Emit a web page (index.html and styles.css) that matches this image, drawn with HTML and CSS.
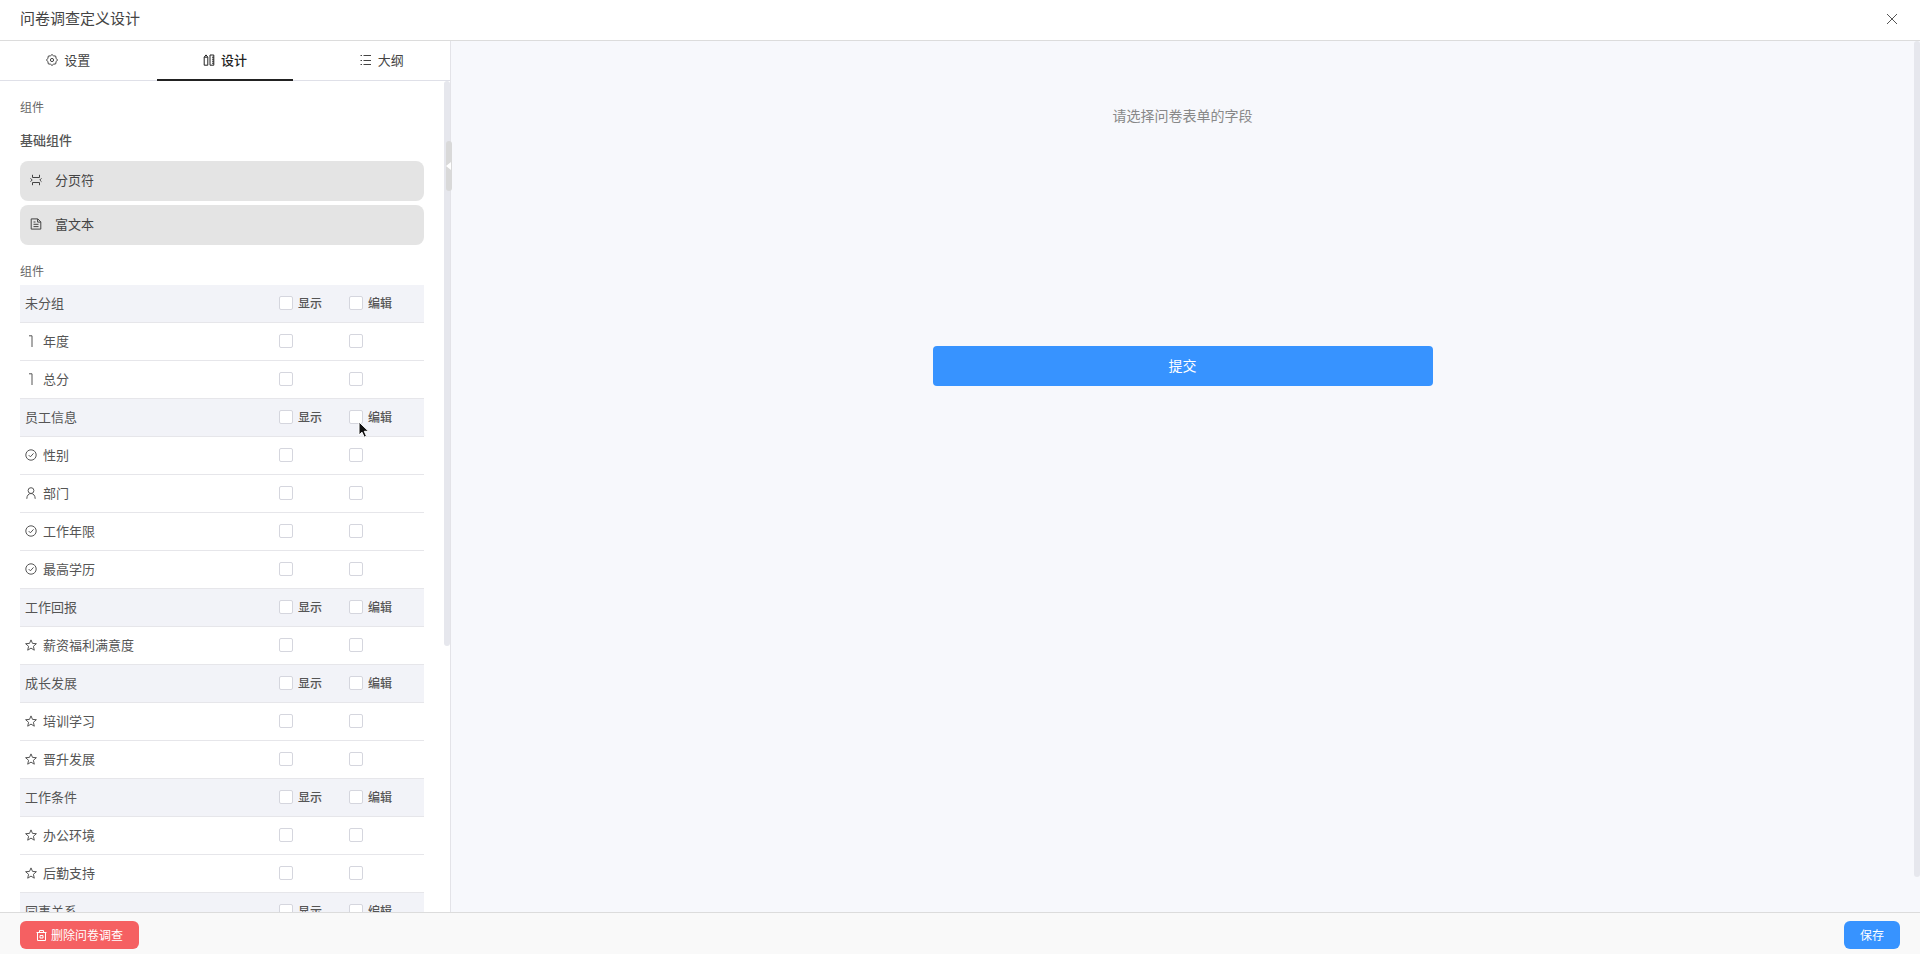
FILE: index.html
```html
<!DOCTYPE html>
<html lang="zh-CN">
<head>
    <meta charset="UTF-8">
    <meta name="viewport" content="width=device-width, initial-scale=1.0">
    <title>问卷调查定义设计</title>
    <link rel="stylesheet" href="styles.css">
</head>
<body>
    <!-- shared icons -->
    <svg class="sprite" aria-hidden="true">
        <symbol id="i-check" viewBox="0 0 12 12"><circle cx="6" cy="6" r="5.2"/><path d="M3.7 6.1l1.7 1.7 3.1-3.4"/></symbol>
        <symbol id="i-star" viewBox="0 0 12 12"><path d="M6 .9l1.5 3.5 3.9.3-3 2.6.9 3.9L6 9.1l-3.3 2.1.9-3.9-3-2.6 3.9-.3z"/></symbol>
        <symbol id="i-user" viewBox="0 0 12 12"><circle cx="6" cy="3.6" r="2.9"/><path d="M1.8 11.8C1.8 8.6 3.6 6.5 6 6.5s4.2 2.1 4.2 5.3"/></symbol>
        <symbol id="i-number" viewBox="0 0 12 12"><path d="M4 .8h3V12"/></symbol>
    </svg>

    <div class="page">
        <header class="header">
            <h1>问卷调查定义设计</h1>
            <button class="close-btn" aria-label="关闭">
                <svg viewBox="0 0 12 12"><path d="M1 1l10 10M11 1L1 11"/></svg>
            </button>
        </header>

        <div class="body">
            <aside class="sidebar">
                <nav class="tabs">
                    <button class="tab">
                        <svg class="icon" viewBox="0 0 12 12"><path d="M6 .5l1.5 1.3 2.2.3.4 2.2L11.5 6l-1.4 1.7-.4 2.2-2.2.3L6 11.5l-1.5-1.3-2.2-.3-.4-2.2L.5 6l1.4-1.7.4-2.2 2.2-.3z"/><circle cx="6" cy="6" r="1.6"/></svg>
                        设置
                    </button>
                    <button class="tab active">
                        <svg class="icon" viewBox="0 0 12 12"><path d="M1.2 11.2V3.2L3 .9l1.8 2.3v8zM1.2 3.2h3.6M7 1h3.8v10.2H7zM9 3.2h1.8M9 5.2h1.8M9 7.2h1.8M9 9.2h1.8"/></svg>
                        设计
                    </button>
                    <button class="tab">
                        <svg class="icon" viewBox="0 0 12 12"><path d="M3.5 1.5H11M3.5 6.5H11M3.5 10.5H11M.5 1.5h1.5M.5 6.5h1.5M.5 10.5h1.5"/></svg>
                        大纲
                    </button>
                </nav>

                <div class="scroll-area">
                    <div class="panel">
                        <p class="caption">组件</p>
                        <h2>基础组件</h2>
                        <div class="widgets">
                            <button class="widget">
                                <svg class="icon" viewBox="0 0 12 12"><path d="M2.5.8v2.7h7V.8M2.5 11.2V8.5h7v2.7M.5 4.3L2.2 6 .5 7.7M11.5 4.3L9.8 6l1.7 1.7"/></svg>
                                分页符
                            </button>
                            <button class="widget">
                                <svg class="icon" viewBox="0 0 12 12"><path d="M1.2.9h6.6l3 3v7.2H1.2zM7.6 1v3.1h3.1M3.5 4h2M3.5 6.3h5M3.5 8.6h5"/></svg>
                                富文本
                            </button>
                        </div>

                        <p class="caption">组件</p>
                        <table class="fields">
                            <colgroup><col><col class="col-show"><col class="col-edit"></colgroup>
                            <tbody>
                                <tr class="group">
                                    <th>未分组</th>
                                    <td><label><input type="checkbox">显示</label></td>
                                    <td><label><input type="checkbox">编辑</label></td>
                                </tr>
                                <tr>
                                    <td><span class="field"><svg class="icon"><use href="#i-number"/></svg>年度</span></td>
                                    <td><input type="checkbox" aria-label="年度 显示"></td>
                                    <td><input type="checkbox" aria-label="年度 编辑"></td>
                                </tr>
                                <tr>
                                    <td><span class="field"><svg class="icon"><use href="#i-number"/></svg>总分</span></td>
                                    <td><input type="checkbox" aria-label="总分 显示"></td>
                                    <td><input type="checkbox" aria-label="总分 编辑"></td>
                                </tr>
                                <tr class="group">
                                    <th>员工信息</th>
                                    <td><label><input type="checkbox">显示</label></td>
                                    <td class="hovered">
                                        <label><input type="checkbox">编辑</label>
                                        <svg class="pointer" viewBox="0 0 12 18"><path d="M1 1v13l3-2.8 2.2 5 2.3-1-2.2-4.9h4.3z"/></svg>
                                    </td>
                                </tr>
                                <tr>
                                    <td><span class="field"><svg class="icon"><use href="#i-check"/></svg>性别</span></td>
                                    <td><input type="checkbox" aria-label="性别 显示"></td>
                                    <td><input type="checkbox" aria-label="性别 编辑"></td>
                                </tr>
                                <tr>
                                    <td><span class="field"><svg class="icon"><use href="#i-user"/></svg>部门</span></td>
                                    <td><input type="checkbox" aria-label="部门 显示"></td>
                                    <td><input type="checkbox" aria-label="部门 编辑"></td>
                                </tr>
                                <tr>
                                    <td><span class="field"><svg class="icon"><use href="#i-check"/></svg>工作年限</span></td>
                                    <td><input type="checkbox" aria-label="工作年限 显示"></td>
                                    <td><input type="checkbox" aria-label="工作年限 编辑"></td>
                                </tr>
                                <tr>
                                    <td><span class="field"><svg class="icon"><use href="#i-check"/></svg>最高学历</span></td>
                                    <td><input type="checkbox" aria-label="最高学历 显示"></td>
                                    <td><input type="checkbox" aria-label="最高学历 编辑"></td>
                                </tr>
                                <tr class="group">
                                    <th>工作回报</th>
                                    <td><label><input type="checkbox">显示</label></td>
                                    <td><label><input type="checkbox">编辑</label></td>
                                </tr>
                                <tr>
                                    <td><span class="field"><svg class="icon"><use href="#i-star"/></svg>薪资福利满意度</span></td>
                                    <td><input type="checkbox" aria-label="薪资福利满意度 显示"></td>
                                    <td><input type="checkbox" aria-label="薪资福利满意度 编辑"></td>
                                </tr>
                                <tr class="group">
                                    <th>成长发展</th>
                                    <td><label><input type="checkbox">显示</label></td>
                                    <td><label><input type="checkbox">编辑</label></td>
                                </tr>
                                <tr>
                                    <td><span class="field"><svg class="icon"><use href="#i-star"/></svg>培训学习</span></td>
                                    <td><input type="checkbox" aria-label="培训学习 显示"></td>
                                    <td><input type="checkbox" aria-label="培训学习 编辑"></td>
                                </tr>
                                <tr>
                                    <td><span class="field"><svg class="icon"><use href="#i-star"/></svg>晋升发展</span></td>
                                    <td><input type="checkbox" aria-label="晋升发展 显示"></td>
                                    <td><input type="checkbox" aria-label="晋升发展 编辑"></td>
                                </tr>
                                <tr class="group">
                                    <th>工作条件</th>
                                    <td><label><input type="checkbox">显示</label></td>
                                    <td><label><input type="checkbox">编辑</label></td>
                                </tr>
                                <tr>
                                    <td><span class="field"><svg class="icon"><use href="#i-star"/></svg>办公环境</span></td>
                                    <td><input type="checkbox" aria-label="办公环境 显示"></td>
                                    <td><input type="checkbox" aria-label="办公环境 编辑"></td>
                                </tr>
                                <tr>
                                    <td><span class="field"><svg class="icon"><use href="#i-star"/></svg>后勤支持</span></td>
                                    <td><input type="checkbox" aria-label="后勤支持 显示"></td>
                                    <td><input type="checkbox" aria-label="后勤支持 编辑"></td>
                                </tr>
                                <tr class="group">
                                    <th>同事关系</th>
                                    <td><label><input type="checkbox">显示</label></td>
                                    <td><label><input type="checkbox">编辑</label></td>
                                </tr>
                            </tbody>
                        </table>
                    </div>
                    <div class="thumb thumb-side"></div>
                </div>
                <button class="collapse-btn" aria-label="收起">
                    <svg viewBox="0 0 6 8"><path d="M5 0v8L0 4z"/></svg>
                </button>
            </aside>

            <main class="preview">
                <p class="hint">请选择问卷表单的字段</p>
                <button class="submit-btn">提交</button>
                <div class="thumb thumb-main"></div>
            </main>
        </div>

        <footer class="footer">
            <button class="btn btn-danger">
                <svg class="icon-sm" viewBox="0 0 11 11"><path d="M.5 2.5h10M3.5 2.5v-2h4v2M1.5 2.5v8h8v-8M4 5.5h3v2.5H4z"/></svg>
                删除问卷调查
            </button>
            <button class="btn btn-primary">保存</button>
        </footer>
    </div>
</body>
</html>
```
FILE: styles.css
```css
* {
    box-sizing: border-box;
}
body {
    margin: 0;
    font-family: "Noto Sans CJK SC", sans-serif;
    font-size: 13px;
    line-height: 20px;
    color: #555;
    background: #fff;
}
button {
    font: inherit;
    color: inherit;
    border: none;
    background: none;
    padding: 0;
    cursor: pointer;
}
h1, h2, p {
    margin: 0;
}
svg {
    display: block;
    fill: none;
    stroke: currentColor;
}
.sprite {
    position: absolute;
    width: 0;
    height: 0;
}
.icon {
    width: 12px;
    height: 12px;
    flex: none;
}
.icon-sm {
    width: 11px;
    height: 11px;
}
.page {
    display: flex;
    flex-direction: column;
    height: 100vh;
}

/* header */
.header {
    display: flex;
    align-items: center;
    justify-content: space-between;
    padding: 8px 22px 12px 20px;
    border-bottom: 1px solid #dcdcdc;
}
.header h1 {
    font-size: 15px;
    font-weight: 400;
    line-height: 20px;
    color: #444;
}
.close-btn {
    padding-top: 2px;
}
.close-btn svg {
    width: 12px;
    height: 12px;
}

.body {
    display: flex;
    flex: 1;
    min-height: 0;
}

/* left panel */
.sidebar {
    position: relative;
    display: flex;
    flex-direction: column;
    width: 451px;
    flex: none;
    border-right: 1px solid #e3e3e8;
}
.tabs {
    display: grid;
    grid-template-columns: repeat(3, 1fr);
    gap: 20px;
    border-bottom: 1px solid #dfe0e8;
}
.tab {
    display: flex;
    align-items: center;
    justify-content: center;
    gap: 6px;
    height: 40px;
    margin-bottom: -1px;
    border-bottom: 2px solid transparent;
    color: #444;
}
.tab.active {
    color: #222;
    font-weight: 500;
    border-bottom-color: #222;
}
.scroll-area {
    position: relative;
    flex: 1;
    min-height: 0;
}
.panel {
    height: 100%;
    overflow-y: auto;
    scrollbar-width: none;
    padding: 16px 26px 0 20px;
}
.caption {
    font-size: 12px;
    color: #666;
}
.panel h2 {
    margin: 13px 0 11px;
    font-size: 13px;
    font-weight: 500;
    color: #555;
}
.widgets {
    display: flex;
    flex-direction: column;
    gap: 4px;
    margin-bottom: 16px;
}
.widget {
    display: flex;
    align-items: center;
    gap: 13px;
    height: 40px;
    padding: 0 10px 2px;
    border-radius: 8px;
    background: #e4e4e4;
    color: #444;
}
.fields {
    width: 100%;
    margin-top: 4px;
    table-layout: fixed;
    border-collapse: separate;
    border-spacing: 0;
}
.col-show {
    width: 70px;
}
.col-edit {
    width: 75px;
}
.fields th,
.fields td {
    height: 38px;
    padding: 0 0 2px 5px;
    border-bottom: 1px solid #e6e6ea;
    font-weight: 400;
    text-align: left;
}
.group {
    background: #f2f3f8;
}
.field {
    display: flex;
    align-items: center;
    gap: 6px;
}
.fields th + td,
.fields td + td {
    padding-left: 0;
}
.fields label {
    display: flex;
    align-items: center;
    gap: 5px;
    font-size: 12px;
    font-weight: 500;
    color: #555;
}
.fields input {
    display: block;
    appearance: none;
    width: 14px;
    height: 14px;
    margin: 0;
    border: 1px solid #d5d6de;
    border-radius: 2px;
    background: #fff;
}
.hovered {
    position: relative;
}
.pointer {
    position: absolute;
    left: 9px;
    top: 22px;
    width: 12px;
    height: 18px;
    fill: #111;
    stroke: #fff;
}

/* scroll thumbs lie over the scrolled content */
.thumb {
    position: absolute;
    top: 0;
    right: 0;
    width: 6px;
    border-radius: 3px;
    background: #e6e7ed;
}
.thumb-side {
    height: 68%;
}
.thumb-main {
    height: 96%;
}
.collapse-btn {
    position: absolute;
    top: 100px;
    right: -2px;
    z-index: 1;
    display: flex;
    align-items: center;
    width: 6px;
    height: 50px;
    border-radius: 3px;
    background: #d9d9d9;
}
.collapse-btn svg {
    width: 6px;
    height: 8px;
    fill: #fff;
    stroke: none;
}

/* right side */
.preview {
    position: relative;
    display: flex;
    flex-direction: column;
    align-items: center;
    flex: 1;
    gap: 221px;
    padding: 64px 6px 0 0;
    background: #f7f8fc;
}
.hint {
    font-size: 14px;
    color: #888;
}
.submit-btn {
    width: 500px;
    max-width: 100%;
    height: 40px;
    padding-bottom: 2px;
    border-radius: 4px;
    background: #3793ff;
    color: #fff;
    font-size: 14px;
}

/* footer */
.footer {
    display: flex;
    justify-content: space-between;
    padding: 8px 20px 5px;
    border-top: 1px solid #dcdcdc;
    background: #f9f9f9;
}
.btn {
    display: flex;
    align-items: center;
    gap: 4px;
    height: 28px;
    padding: 0 16px;
    border-radius: 6px;
    color: #fff;
    font-size: 12px;
}
.btn-danger {
    background: #f56062;
}
.btn-primary {
    background: #3793ff;
}
```
